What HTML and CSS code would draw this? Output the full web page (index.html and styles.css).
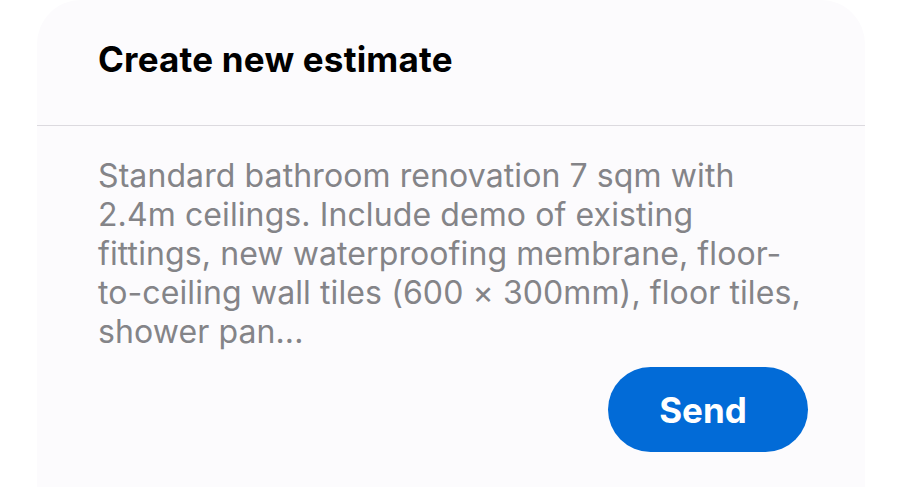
FILE: index.html
```html
<!DOCTYPE html>
<html lang="en">
<head>
<meta charset="utf-8">
<title>Create new estimate</title>
<link rel="stylesheet" href="styles.css">
</head>
<body>
<div class="card">
  <div class="card-header">
    <h1 class="title">Create new estimate</h1>
  </div>
  <div class="card-body">
    <p class="prompt">Standard bathroom renovation 7 sqm with 2.4m ceilings. Include demo of existing fittings, new waterproofing membrane, floor-to-ceiling wall tiles (600 × 300mm), floor tiles, shower pan...</p>
    <div class="actions">
      <button class="send" type="button">Send</button>
    </div>
  </div>
</div>
</body>
</html>
```
FILE: styles.css
```css
html, body {
  margin: 0;
  padding: 0;
  background: #ffffff;
  height: 100%;
}
body {
  font-family: Inter, "Noto Sans", sans-serif;
  overflow: hidden;
}
.card {
  margin-left: 37px;
  width: 828px;
  height: 100%;
  background: #fcfbfd;
  border-radius: 44px 44px 0 0;
}
.card-header {
  height: 126px;
  border-bottom: 1px solid #dcdadf;
  padding: 38px 0 0 61px;
  box-sizing: border-box;
}
.title {
  margin: 0;
  font-size: 35px;
  line-height: normal;
  font-weight: 700;
  color: #000000;
  letter-spacing: 0.2px;
}
.card-body {
  padding: 30px 40px 0 61px;
}
.prompt {
  margin: 0;
  max-width: 715px;
  font-size: 32px;
  line-height: 39px;
  letter-spacing: 0.1px;
  color: #848488;
  font-weight: 400;
}
.actions {
  display: flex;
  justify-content: flex-end;
  margin-top: 16px;
  padding-right: 17px;
}
.send {
  width: 200px;
  height: 85px;
  border: none;
  border-radius: 43px;
  background: #026bd7;
  color: #ffffff;
  font-family: Inter, "Noto Sans", sans-serif;
  font-size: 35px;
  font-weight: 700;
  padding: 0 10px 0 0;
}
```
